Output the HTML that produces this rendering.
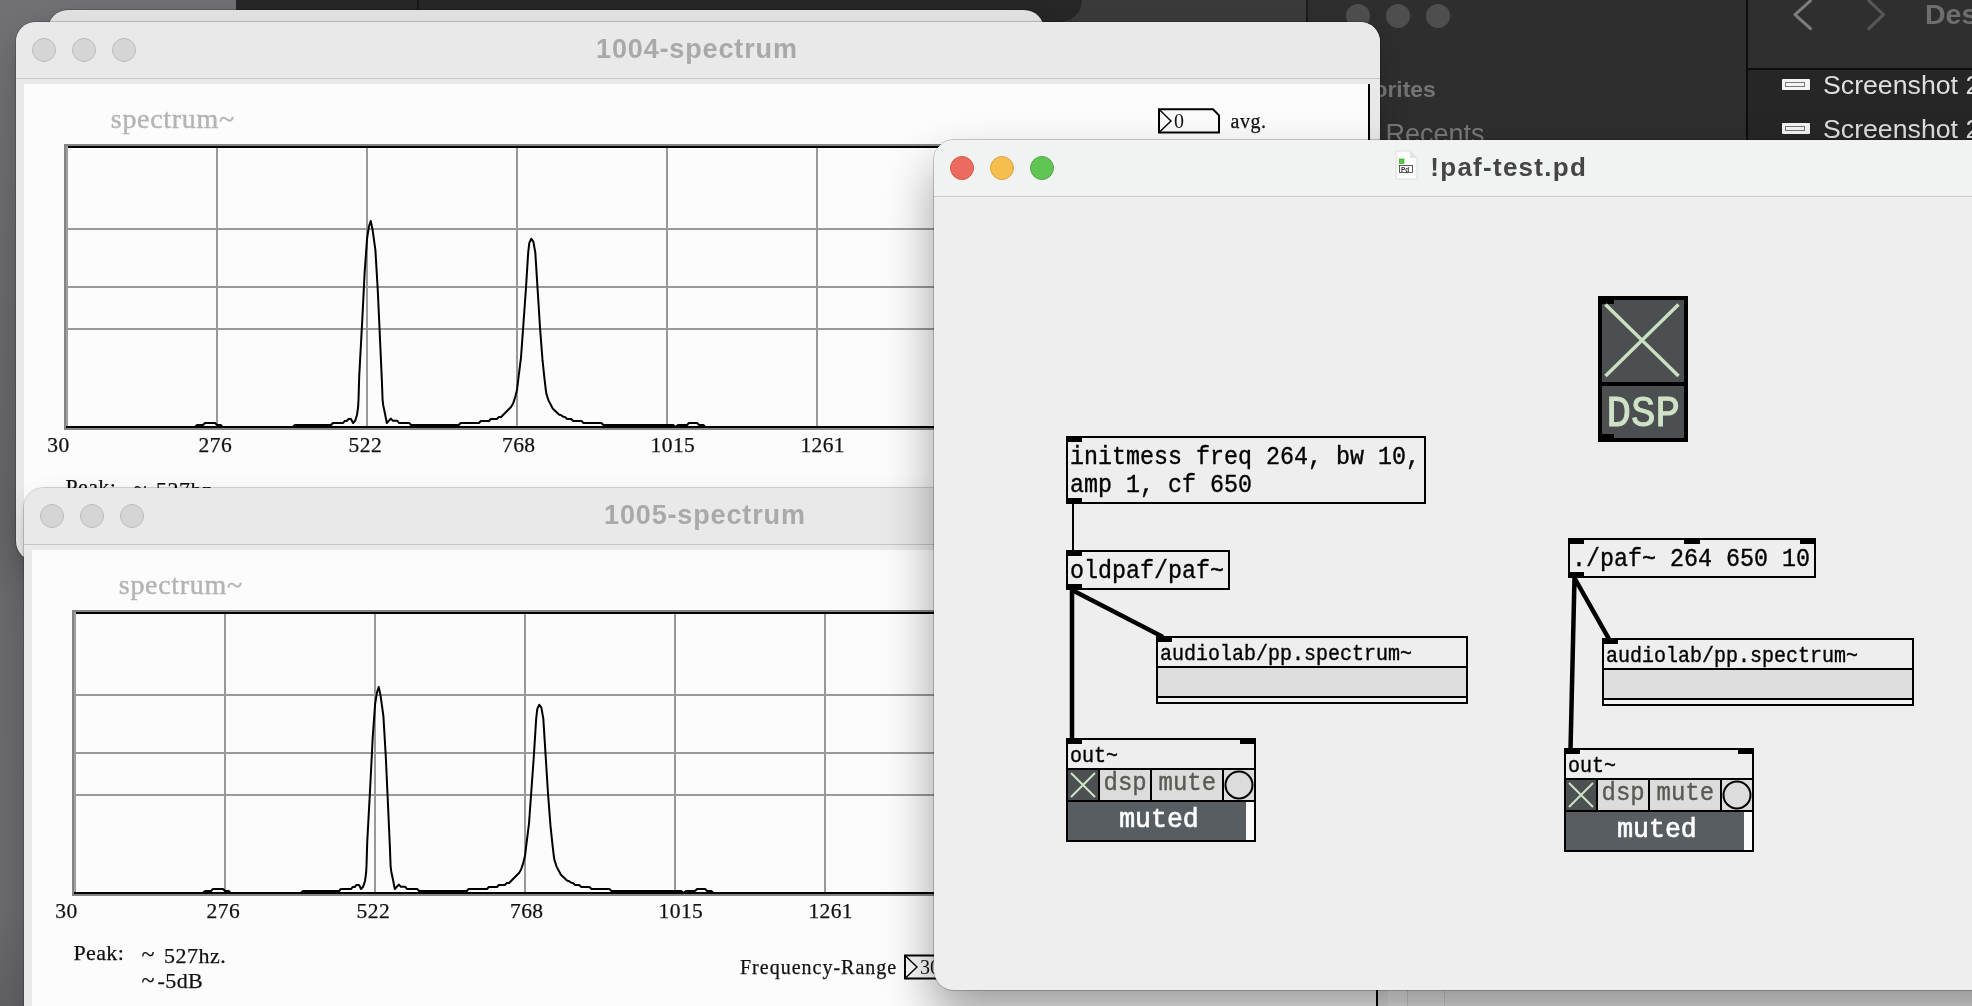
<!DOCTYPE html>
<html>
<head>
<meta charset="utf-8">
<title>paf-test</title>
<style>
html,body{margin:0;padding:0;}
body{width:1972px;height:1006px;overflow:hidden;position:relative;background:#66666b;font-family:"Liberation Sans",sans-serif;}
.abs{position:absolute;}
svg,.win,#finder,#fright{will-change:transform;}
#desk{left:0;top:0;width:1972px;height:1006px;background:linear-gradient(180deg,#707075 0%,#6a6a6f 20%,#646469 48%,#68686d 62%,#69696e 90%,#5f5f64 100%);}
/* dark windows behind */
#dk1{left:236px;top:0;width:846px;height:22px;background:#272727;border-radius:0 0 22px 0;}
#dk1 i{position:absolute;left:181px;top:0;width:2px;height:22px;background:#1a1a1a;}
#dk2{left:1082px;top:0;width:224px;height:30px;background:#3a3a3a;}
#dk2b{left:1040px;top:0;width:60px;height:30px;background:#3a3a3a;}
#finder{left:1306px;top:0;width:666px;height:160px;background:#2e2e2e;border-left:2px solid #1c1c1c;}
#fright{left:1746px;top:0;width:225px;height:160px;background:#262626;border-left:2px solid #0e0e0e;}
#fright .tb{position:absolute;left:0;top:0;width:225px;height:68px;background:#2f2f2f;border-bottom:2px solid #0e0e0e;}
.fdot{position:absolute;top:4px;width:24px;height:24px;border-radius:50%;background:#4e4e4e;}
.ftxt{position:absolute;color:#7b7b7b;font-weight:bold;white-space:nowrap;}
.fitem{position:absolute;color:#dedede;font-size:26.7px;white-space:nowrap;left:75px;}
.ficon{position:absolute;left:34px;width:28px;height:11px;background:#f4f4f4;border-radius:1px;}
.ficon i{position:absolute;left:3px;top:3px;width:20px;height:5px;border:1px solid #777;box-sizing:border-box;}
/* light windows */
.win{background:#e9e9e9;border-radius:20px;box-shadow:0 0 0 1px rgba(0,0,0,.16),0 14px 30px rgba(0,0,0,.16),0 2px 6px rgba(0,0,0,.08);}
.win .tbar{position:absolute;left:0;top:0;right:0;height:56px;border-bottom:1px solid #c6c6c6;border-radius:20px 20px 0 0;background:#e9e9e9;}
.win .tl{position:absolute;top:16px;width:22px;height:22px;border-radius:50%;background:#d5d5d5;border:1px solid #bcbcbc;}
.win .title{position:absolute;top:10.5px;height:32px;line-height:32px;font-size:27px;font-weight:bold;color:#a9a9a9;white-space:nowrap;letter-spacing:0.86px;}
.win .content{position:absolute;left:8px;top:62px;width:1346px;background:#fcfcfc;}
.serif{font-family:"Liberation Serif",serif;color:#111;white-space:nowrap;position:absolute;}
.mono{font-family:"Liberation Mono",monospace;color:#000;white-space:pre;position:absolute;}
</style>
</head>
<body>
<div id="desk" class="abs"></div>
<svg width="0" height="0" style="position:absolute">
<defs>
<symbol id="spec" viewBox="0 0 1364 560" width="1364" height="560" overflow="visible">
  <g font-family="Liberation Serif, serif" fill="#111">
  <text x="94.8" y="105.9" font-size="28" fill="#b4b4b4" stroke="#b4b4b4" stroke-width="0.45" letter-spacing="0.7">spectrum~</text>
  <!-- graph frame -->
  <rect x="49" y="123" width="1300" height="284" fill="none" stroke="#858585" stroke-width="2"/>
  <rect x="50" y="124" width="2" height="282" fill="#a0a0a0"/>
  <g stroke="#999" stroke-width="2">
    <path d="M201 125V405M351 125V405M501 125V405M651 125V405M801 125V405M951 125V405M1101 125V405M1251 125V405"/>
    <path d="M52 207H1348M52 265H1348M52 307H1348"/>
  </g>
  <rect x="52" y="124" width="1296" height="2" fill="#000"/>
  <path d="M50 405 L179 405 L181 403 L187 403 L189 401 L199 401 L201 403 L205 403 L206.5 405 L276.8 405 L278.9 403 L315.1 403 L316.9 401 L327.2 401 L328.6 399 L330.7 399 L332.5 397 L335 397 L337.1 401 L339.2 398.6 L341 393 L342.1 385 L342.5 378 L343.2 354.6 L346.3 297.3 L348.7 249.6 L351.1 216.2 L353 204.2 L354.7 199 L356.6 207.8 L359.4 228.1 L361.8 268.7 L364.2 321.2 L365.9 359.3 L366.6 378 L367.3 383.7 L369.1 392.2 L370.8 401 L374.8 396.6 L376.9 398.7 L381.1 398.7 L382.9 400.9 L393.2 400.9 L395 403 L442.8 403 L444.6 401 L463 401 L464.8 399 L473 399 L474.8 397 L480.8 397 L482.9 395 L485.1 395 L495 385 L497.1 381.5 L499.2 375.1 L501 368 L502.6 354.6 L505 335.5 L507.4 302.1 L509.8 268.7 L512.2 230.5 L513.3 220.9 L515.3 216.7 L517.4 219.8 L519.3 230.5 L521.7 268.7 L524.1 306.8 L526.5 337.9 L528.4 355.8 L529.8 368 L530.5 372.3 L532.6 378.6 L536.9 386.8 L543.3 392.8 L544.8 393 L547.5 394.8 L549 395 L551.1 396.9 L555.2 397 L557.3 399 L565.5 399 L567.5 401 L585.4 401 L587.4 403 L657.2 403 L659.6 405 L662 403 L671 403 L673 401 L681.1 401 L683.1 403 L687.6 403 L689.2 405 L1344 405" fill="none" stroke="#000" stroke-width="2" stroke-linejoin="round"/>
  <rect x="52" y="404" width="1296" height="2" fill="#000"/>
  <!-- axis labels -->
  <g font-size="21.5" letter-spacing="0.4" stroke="#111" stroke-width="0.25">
  <text x="31.3" y="429.7">30</text>
  <text x="182.6" y="429.7">276</text>
  <text x="332.6" y="429.7">522</text>
  <text x="486" y="429.7">768</text>
  <text x="634.6" y="429.7">1015</text>
  <text x="784.4" y="429.7">1261</text>
  </g>
  <g font-size="22" stroke="#111" stroke-width="0.25">
  <text x="49.5" y="471.5" letter-spacing="0.35">Peak:</text>
  <text x="117.5" y="474" font-size="24">~</text>
  <text x="140" y="474.5" letter-spacing="0.5">527hz.</text>
  <text x="117.5" y="499.5" font-size="24">~</text>
  <text x="133.5" y="499.5" letter-spacing="0.4">-5dB</text>
  </g>
  <text x="716" y="485.7" font-size="20" letter-spacing="1" stroke="#111" stroke-width="0.25">Frequency-Range</text>
  <!-- number box bottom -->
  <path d="M881 467.5H937L943 473.5V490.5H881Z" fill="none" stroke="#000" stroke-width="2"/>
  <path d="M881 467.5L893 479L881 490.5" fill="none" stroke="#000" stroke-width="1.4"/>
  <text x="896" y="486" font-size="20">30</text>
  <!-- number box top -->
  <path d="M1143 87.3H1197L1203 93.3V110.6H1143Z" fill="none" stroke="#000" stroke-width="2"/>
  <path d="M1143 87.3L1155 99L1143 110.6" fill="none" stroke="#000" stroke-width="1.4"/>
  <text x="1158" y="105.5" font-size="20">0</text>
  <text x="1214.6" y="105.5" font-size="20" letter-spacing="0.5" stroke="#111" stroke-width="0.25">avg.</text>
  <rect x="1352" y="62" width="2" height="500" fill="#000"/>
  </g>
</symbol>
</defs>
</svg>


<!-- dark background windows -->
<div id="dk2b" class="abs"></div>
<div id="dk2" class="abs"></div>
<div id="dk1" class="abs"><i></i></div>
<div id="finder" class="abs">
  <div class="fdot" style="left:38px"></div>
  <div class="fdot" style="left:78px"></div>
  <div class="fdot" style="left:118px"></div>
  <div class="ftxt" style="left:26px;top:76px;font-size:22.9px;color:#747474;">Favorites</div>
  <div class="ftxt" style="left:77.5px;top:119.3px;font-size:27px;font-weight:normal;color:#787878;">Recents</div>
</div>
<div id="fright" class="abs">
  <div class="tb"></div>
  <svg class="abs" style="left:41px;top:0" width="120" height="34" viewBox="0 0 120 34"><path d="M21.5 0.7 L6 14.7 L21.5 28.7" fill="none" stroke="#7d7d7d" stroke-width="3" stroke-linecap="round" stroke-linejoin="round"/><path d="M79.8 0.7 L94.5 14.7 L79.8 28.7" fill="none" stroke="#575757" stroke-width="3" stroke-linecap="round" stroke-linejoin="round"/></svg>
  <div class="ftxt" style="left:177px;top:-2.3px;font-size:28.5px;color:#6e6e6e;">Des</div>
  <div class="ficon" style="top:79px"><i></i></div>
  <div class="fitem" style="top:70px;">Screenshot 2</div>
  <div class="ficon" style="top:123px"><i></i></div>
  <div class="fitem" style="top:114px;">Screenshot 2</div>
</div>

<!-- back-most light window peeking at top -->
<div class="abs win" style="left:48px;top:10px;width:996px;height:200px;background:#e2e2e2;"></div>

<!-- WINDOW 1004 -->
<div id="w1004" class="abs win" style="left:16px;top:22px;width:1364px;height:539px;">
  <div class="tbar"></div>
  <div class="tl" style="left:16px"></div><div class="tl" style="left:56px"></div><div class="tl" style="left:96px"></div>
  <div class="title" style="left:580px;">1004-spectrum</div>
  <div class="content" style="height:466px;"></div>
  <svg class="abs" style="left:0;top:0;" width="1364" height="528" viewBox="0 0 1364 528"><use href="#spec"/></svg>
</div>

<!-- WINDOW 1005 -->
<div id="w1005" class="abs win" style="left:24px;top:488px;width:1364px;height:560px;">
  <div class="tbar"></div>
  <div class="tl" style="left:16px"></div><div class="tl" style="left:56px"></div><div class="tl" style="left:96px"></div>
  <div class="title" style="left:580px;">1005-spectrum</div>
  <div class="content" style="height:500px;"></div>
  <svg class="abs" style="left:0;top:0;" width="1364" height="540" viewBox="0 0 1364 540"><use href="#spec"/></svg>
</div>

<!-- bottom strip window behind paf -->
<div class="abs" style="left:1388px;top:960px;width:584px;height:46px;background:#ececec;"><i class="abs" style="left:0;top:0;width:19px;height:46px;background:#f2f2f2;border-right:1px solid #d8d8d8"></i><i class="abs" style="left:20px;top:0;width:36px;height:46px;background:#eeeeee;border-right:1px solid #d8d8d8"></i></div>

<!-- PAF WINDOW -->
<div id="paf" class="abs" style="left:934px;top:140px;width:1100px;height:850px;background:#eeeeee;border-radius:20px;box-shadow:0 0 0 1px rgba(0,0,0,.2),0 26px 50px rgba(0,0,0,.38);">
  <div class="abs" style="left:0;top:0;right:0;height:56px;background:#f1f3f2;border-bottom:1px solid #cfcfcf;border-radius:20px 20px 0 0;"></div>
</div>

<!--PAFSVG-->
<svg class="abs" style="left:0;top:0" width="1972" height="1006" viewBox="0 0 1972 1006" font-family="Liberation Mono, monospace">
<circle cx="962" cy="168" r="11.5" fill="#ed6a5e" stroke="#d5554a" stroke-width="1"/>
<circle cx="1002" cy="168" r="11.5" fill="#f5bf4f" stroke="#d9a33c" stroke-width="1"/>
<circle cx="1042" cy="168" r="11.5" fill="#61c554" stroke="#4fa943" stroke-width="1"/>
<g transform="translate(1395,151)"><path d="M1 0H15L22 7V28H1Z" fill="#fdfdfd" stroke="#dcdcdc" stroke-width="1"/><path d="M15 0V7H22Z" fill="#e4e4e4"/><rect x="4.5" y="8" width="4.5" height="4.5" fill="#4fd23c" stroke="#2f9a22" stroke-width=".6"/><rect x="4.5" y="14.5" width="13" height="7" fill="#fff" stroke="#333" stroke-width=".8"/><text x="6" y="20.6" font-family="Liberation Sans, sans-serif" font-weight="bold" font-size="6.5" fill="#333">Pd</text></g>
<text x="1430.3" y="175.6" font-family="Liberation Sans, sans-serif" font-weight="bold" font-size="26" fill="#454545" letter-spacing="1.27">!paf-test.pd</text>
<rect x="1598" y="296" width="90" height="146" fill="#000"/>
<rect x="1602" y="300" width="82" height="82" fill="#4b4f52"/>
<rect x="1602" y="386" width="82" height="52" fill="#4b4f52"/>
<rect x="1598" y="296" width="16" height="8" fill="#000"/>
<rect x="1598" y="434" width="16" height="8" fill="#000"/>
<path d="M1605.5 304.5L1678.5 376M1678.5 304.5L1605.5 376" stroke="#cbdfc1" stroke-width="3.5" fill="none"/>
<text transform="translate(1606.5,425.6) scale(1,1.09)" font-size="40.8" fill="#cfe2c6" stroke="#cfe2c6" stroke-width="0.9" >DSP</text>
<rect x="1067" y="437" width="358" height="66" fill="none" stroke="#000" stroke-width="2"/>
<rect x="1066" y="436" width="16" height="6" fill="#000"/>
<rect x="1066" y="498" width="16" height="6" fill="#000"/>
<text transform="translate(1070,464) scale(1,1.1)" font-size="23.33" fill="#000" stroke="#000" stroke-width="0.35" >initmess freq 264, bw 10,</text>
<text transform="translate(1070,492) scale(1,1.1)" font-size="23.33" fill="#000" stroke="#000" stroke-width="0.35" >amp 1, cf 650</text>
<rect x="1072" y="504" width="2" height="46" fill="#000"/>
<rect x="1067" y="551" width="162" height="38" fill="none" stroke="#000" stroke-width="2"/>
<rect x="1066" y="550" width="16" height="6" fill="#000"/>
<rect x="1066" y="584" width="16" height="6" fill="#000"/>
<text transform="translate(1070,578) scale(1,1.1)" font-size="23.33" fill="#000" stroke="#000" stroke-width="0.35" >oldpaf/paf~</text>
<path d="M1072 590V740M1072 590L1163 637" stroke="#000" stroke-width="4.5" fill="none"/>
<rect x="1158" y="668" width="308" height="28" fill="#dedede"/>
<rect x="1158" y="698" width="308" height="4" fill="#f2f2f2"/>
<rect x="1157" y="637" width="310" height="66" fill="none" stroke="#000" stroke-width="2"/>
<rect x="1156" y="666" width="312" height="2" fill="#000"/>
<rect x="1156" y="696" width="312" height="2" fill="#000"/>
<rect x="1156" y="636" width="16" height="6" fill="#000"/>
<text transform="translate(1160,660) scale(1,1.1)" font-size="20" fill="#000" stroke="#000" stroke-width="0.35" >audiolab/pp.spectrum~</text>
<rect x="1068" y="770" width="30" height="30" fill="#4c5053"/>
<rect x="1100" y="770" width="50" height="30" fill="#dcdcdc"/>
<rect x="1152" y="770" width="70" height="30" fill="#dcdcdc"/>
<rect x="1224" y="770" width="30" height="30" fill="#dcdcdc"/>
<rect x="1068" y="802" width="178" height="38" fill="#585d62"/>
<rect x="1246" y="802" width="8" height="38" fill="#fbfbfb"/>
<rect x="1067" y="739" width="188" height="102" fill="none" stroke="#000" stroke-width="2"/>
<rect x="1066" y="768" width="190" height="2" fill="#000"/>
<rect x="1066" y="800" width="190" height="2" fill="#000"/>
<rect x="1098" y="770" width="2" height="30" fill="#000"/>
<rect x="1150" y="770" width="2" height="30" fill="#000"/>
<rect x="1222" y="770" width="2" height="30" fill="#000"/>
<rect x="1066" y="738" width="16" height="6" fill="#000"/>
<rect x="1240" y="738" width="16" height="6" fill="#000"/>
<path d="M1071 773L1095 797M1095 773L1071 797" stroke="#cfe4c4" stroke-width="2" fill="none"/>
<circle cx="1239" cy="785" r="13.5" fill="#dcdcdc" stroke="#000" stroke-width="2"/>
<text transform="translate(1070,762) scale(1,1.1)" font-size="20" fill="#000" stroke="#000" stroke-width="0.35" >out~</text>
<text transform="translate(1103.5,790.2) scale(1,1.1)" font-size="24" fill="#5a5a54" stroke="#5a5a54" stroke-width="0.35" >dsp</text>
<text transform="translate(1158.5,790.2) scale(1,1.1)" font-size="24" fill="#5a5a54" stroke="#5a5a54" stroke-width="0.35" >mute</text>
<text transform="translate(1119.2,826.8) scale(1,1.06)" font-size="26.5" fill="#ffffff" stroke="#ffffff" stroke-width="0.6" >muted</text>
<rect x="1569" y="539" width="246" height="38" fill="none" stroke="#000" stroke-width="2"/>
<rect x="1568" y="538" width="16" height="6" fill="#000"/>
<rect x="1684" y="538" width="16" height="6" fill="#000"/>
<rect x="1800" y="538" width="16" height="6" fill="#000"/>
<rect x="1568" y="572" width="16" height="6" fill="#000"/>
<text transform="translate(1572,566) scale(1,1.1)" font-size="23.33" fill="#000" stroke="#000" stroke-width="0.35" >./paf~ 264 650 10</text>
<path d="M1574.5 578L1570.5 750M1574.5 578L1609 639" stroke="#000" stroke-width="4.5" fill="none"/>
<rect x="1604" y="670" width="308" height="28" fill="#dedede"/>
<rect x="1604" y="700" width="308" height="4" fill="#f2f2f2"/>
<rect x="1603" y="639" width="310" height="66" fill="none" stroke="#000" stroke-width="2"/>
<rect x="1602" y="668" width="312" height="2" fill="#000"/>
<rect x="1602" y="698" width="312" height="2" fill="#000"/>
<rect x="1602" y="638" width="16" height="6" fill="#000"/>
<text transform="translate(1606,662) scale(1,1.1)" font-size="20" fill="#000" stroke="#000" stroke-width="0.35" >audiolab/pp.spectrum~</text>
<rect x="1566" y="780" width="30" height="30" fill="#4c5053"/>
<rect x="1598" y="780" width="50" height="30" fill="#dcdcdc"/>
<rect x="1650" y="780" width="70" height="30" fill="#dcdcdc"/>
<rect x="1722" y="780" width="30" height="30" fill="#dcdcdc"/>
<rect x="1566" y="812" width="178" height="38" fill="#585d62"/>
<rect x="1744" y="812" width="8" height="38" fill="#fbfbfb"/>
<rect x="1565" y="749" width="188" height="102" fill="none" stroke="#000" stroke-width="2"/>
<rect x="1564" y="778" width="190" height="2" fill="#000"/>
<rect x="1564" y="810" width="190" height="2" fill="#000"/>
<rect x="1596" y="780" width="2" height="30" fill="#000"/>
<rect x="1648" y="780" width="2" height="30" fill="#000"/>
<rect x="1720" y="780" width="2" height="30" fill="#000"/>
<rect x="1564" y="748" width="16" height="6" fill="#000"/>
<rect x="1738" y="748" width="16" height="6" fill="#000"/>
<path d="M1569 783L1593 807M1593 783L1569 807" stroke="#cfe4c4" stroke-width="2" fill="none"/>
<circle cx="1737" cy="795" r="13.5" fill="#dcdcdc" stroke="#000" stroke-width="2"/>
<text transform="translate(1568,772) scale(1,1.1)" font-size="20" fill="#000" stroke="#000" stroke-width="0.35" >out~</text>
<text transform="translate(1601.5,800.2) scale(1,1.1)" font-size="24" fill="#5a5a54" stroke="#5a5a54" stroke-width="0.35" >dsp</text>
<text transform="translate(1656.5,800.2) scale(1,1.1)" font-size="24" fill="#5a5a54" stroke="#5a5a54" stroke-width="0.35" >mute</text>
<text transform="translate(1617.2,836.8) scale(1,1.06)" font-size="26.5" fill="#ffffff" stroke="#ffffff" stroke-width="0.6" >muted</text>
</svg>
<!--/PAFSVG-->
</body>
</html>
